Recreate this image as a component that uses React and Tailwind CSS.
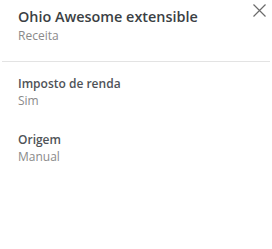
import React from "react";

const fields = [
  { label: "Imposto de renda", value: "Sim" },
  { label: "Origem", value: "Manual" },
];

export default function App() {
  return (
    <div
      className="relative w-[272px] h-[249px] bg-white"
      style={{ fontFamily: '"Open Sans", sans-serif' }}
    >
      <button className="absolute left-[253px] top-[4px] w-[13px] h-[13px] text-[#6b6b6b]">
        <svg width="13" height="13" viewBox="0 0 13 13" fill="none">
          <path d="M0.5 0.5L12.5 12.5M12.5 0.5L0.5 12.5" stroke="currentColor" strokeWidth="1.2" />
        </svg>
      </button>

      <div className="pl-[18px] pt-[7px]">
        <h1 className="text-[14.4px] leading-[20px] font-semibold text-[#3b3f44]">
          Ohio Awesome extensible
        </h1>
        <p className="text-[12px] leading-[18px] text-[#8a8a8a]">Receita</p>
      </div>

      <div className="mx-[2px] mt-[16px] h-px bg-[#e3e3e3]" />

      <div className="pl-[18px] pt-[14px] flex flex-col gap-[22px]">
        {fields.map((field) => (
          <div key={field.label}>
            <p className="text-[12px] leading-[16px] font-semibold text-[#4f5358]">
              {field.label}
            </p>
            <p className="text-[12px] leading-[18px] text-[#8a8a8a]">
              {field.value}
            </p>
          </div>
        ))}
      </div>
    </div>
  );
}
